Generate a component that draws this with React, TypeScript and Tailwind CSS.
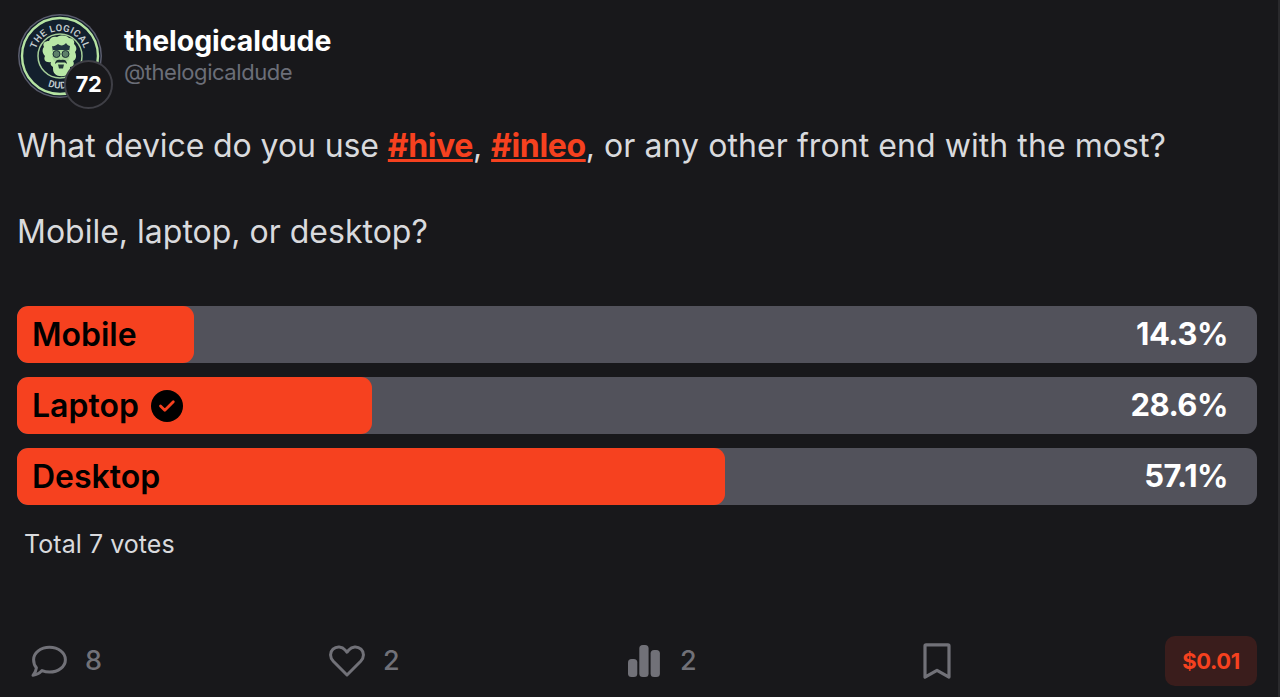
import React from 'react'

const options = [
  { name: 'Mobile', percent: 14.3, voted: false },
  { name: 'Laptop', percent: 28.6, voted: true },
  { name: 'Desktop', percent: 57.1, voted: false },
]

const Avatar = () => (
  <svg viewBox="0 0 84 84" className="size-[84px]">
    <defs>
      <path id="top-arc" d="M17 42a25 25 0 0 1 50 0" />
      <path id="bottom-arc" d="M9.500 42a32.500 32.500 0 0 0 65 0" />
    </defs>
    <circle cx="42" cy="42" r="42" fill="#5b5d6e" />
    <circle cx="42" cy="42" r="40.5" fill="#111c29" />
    <circle cx="42" cy="42" r="38" fill="#13202d" stroke="#b5e3a2" strokeWidth="2.4" />
    <circle cx="42" cy="42" r="22" fill="#13202d" stroke="#a5cf98" strokeWidth="1.5" />
    <g fill="#c3cdd0" fontSize="9.500" fontWeight="600" fontFamily="Roboto, sans-serif">
      <text textAnchor="middle" letterSpacing="0.500">
        <textPath href="#top-arc" startOffset="50%">THE LOGICAL</textPath>
      </text>
      <text textAnchor="middle" letterSpacing="0.300">
        <textPath href="#bottom-arc" startOffset="50%">DUDE</textPath>
      </text>
    </g>
    {/* hair and beard */}
    <path
      d="M31 27c1-4 5-5 8-4 4-2 9-2 12 1 4 0 6 3 5 6 3 3 3 6 1 8 2 4 1 8-2 9 2 3 0 6-3 6 0 3 0 5-2 7-3 3-10 3-13 0-2-2-2-4-2-7-2-1-3-3-2-5-5 1-8-2-6-6-3-3-3-7-1-9-2-4 1-6 5-6z"
      fill="#b9e8a6"
    />
    <path d="M34 32c2 1 4-1 6-2 2 2 6 2 8-1 1 2 3 3 4 3l-1 6H35z" fill="#233740" />
    <path d="M35 36h16l1 7-2 4H36l-2-4z" fill="#a8d699" />
    <circle cx="38.500" cy="40" r="3.500" fill="#5d8069" stroke="#1d3037" />
    <circle cx="47.500" cy="40" r="3.500" fill="#5d8069" stroke="#1d3037" />
    <path d="M37 50c0-4 3-5 6-4 3-1 6 0 6 4l-2-1.500h-8z" fill="#1b2d31" />
    <path d="M40 50.500h6l-1 4h-4z" fill="#243a39" />
  </svg>
)

const CommentIcon = () => (
  <svg viewBox="0 0 36 33" className="h-[33px] w-9" fill="none" stroke="currentColor" strokeWidth="3" strokeLinejoin="round">
    <path d="M18.500 2.300c8.800 0 15.900 5.500 15.900 12.400s-7.100 12.400-15.900 12.400c-2.700 0-5.300-.6-7.500-1.500-2.300 2.500-5.600 4.300-9 4.700 1.800-2.400 3.200-5.200 3.400-7.500-1.800-2.200-2.800-5-2.800-8.100C2.600 7.800 9.700 2.300 18.500 2.300z" />
  </svg>
)

const HeartIcon = () => (
  <svg viewBox="0 0 36 32" className="h-8 w-9" fill="none" stroke="currentColor" strokeWidth="3" strokeLinejoin="round">
    <path d="M18 30 4.300 16.200C.7 12.400.700 7.300 4 4.200c3.600-3.300 9-2.900 12.200.9L18 7.200l1.800-2.100C23 1.300 28.400.9 32 4.200c3.300 3.100 3.300 8.200-.3 12z" />
  </svg>
)

const StatsIcon = () => (
  <svg viewBox="0 0 32 32" className="size-8" fill="currentColor">
    <rect x="0" y="14" width="9.300" height="18" rx="3.500" />
    <rect x="11.300" y="0" width="9.300" height="32" rx="3.500" />
    <rect x="22.600" y="5" width="9.300" height="27" rx="3.500" />
  </svg>
)

const BookmarkIcon = () => (
  <svg viewBox="0 0 28 36" className="h-9 w-7" fill="none" stroke="currentColor" strokeWidth="3.200" strokeLinejoin="round">
    <path d="M2 2.900Q2 1.900 3 1.900h22q1 0 1 1v31.200L14 27.300 2 34.100z" />
  </svg>
)

const App = () => {
  return (
    <div className="h-[697px] w-full overflow-hidden border-r-2 border-[#29292c] bg-[#18181b] pt-3.5 pr-[21px] pl-[17px] font-['Inter',sans-serif]">
      {/* Author */}
      <header className="ml-px flex h-[84px]">
        <div className="relative size-[84px] shrink-0">
          <Avatar />
          <span className="absolute top-[46px] left-[46px] flex size-[49px] items-center justify-center rounded-full border-2 border-[#3f3f46] bg-[#18181b] text-[22px] font-bold tracking-[-0.4px] text-white">
            72
          </span>
        </div>
        <div className="ml-[22px] pt-3">
          <h2 className="text-[28.4px] leading-[30px] font-bold text-white">thelogicaldude</h2>
          <p className="text-[22px] leading-8 tracking-[-0.45px] text-[#6b6e78]">@thelogicaldude</p>
        </div>
      </header>

      {/* Post */}
      <div className="mt-[26px] text-[32px] leading-[43px] whitespace-nowrap text-[#d9dadd]">
        <p>
          <span className="tracking-[-0.09px]">What device do you use </span>
          <a className="font-bold tracking-[-0.4px] text-[#f6411f] underline">#hive</a>,{' '}
          <a className="font-bold tracking-[-0.35px] text-[#f6411f] underline">#inleo</a>
          <span className="tracking-[0.07px]">, or any other front end with the most?</span>
        </p>
        <p className="mt-[43px]">Mobile, laptop, or desktop?</p>
      </div>

      {/* Poll */}
      <div className="mt-[53px] flex flex-col gap-3.5">
        {options.map((option) => (
          <div key={option.name} className="relative flex h-[57px] items-center justify-between overflow-hidden rounded-[11px] bg-[#52525b] pr-[29px] pl-[15px] text-[32px] font-semibold">
            <div className="absolute inset-y-0 left-0 rounded-[11px] bg-[#f6411f]" style={{ width: `${option.percent}%` }} />
            <span className="relative flex items-center gap-3 text-black">
              {option.name}
              {option.voted && (
                <svg viewBox="0 0 32 32" className="size-8">
                  <circle cx="16" cy="16" r="16" fill="#000" />
                  <path d="m9.500 16 4.300 4.200 8.500-8.500" fill="none" stroke="#f6411f" strokeWidth="2.800" strokeLinecap="round" strokeLinejoin="round" />
                </svg>
              )}
            </span>
            <span className="relative text-[31px] font-bold tracking-[-0.5px] text-white">{option.percent}%</span>
          </div>
        ))}
      </div>
      <p className="mt-[21px] ml-[7px] text-[25px] leading-9 tracking-[0.05px] text-[#d9dadd]">Total 7 votes</p>

      {/* Actions */}
      <footer className="mt-[74px] flex h-[50px] items-center text-[27px] font-medium text-[#717178]">
        <div className="flex w-[312px] items-center gap-[18px] pl-3.5">
          <CommentIcon />8
        </div>
        <div className="flex w-[299px] items-center gap-[18px]">
          <HeartIcon />2
        </div>
        <div className="flex w-[295px] items-center gap-5">
          <StatsIcon />2
        </div>
        <BookmarkIcon />
        <span className="ml-auto flex h-[50px] w-[92px] items-center justify-center rounded-[10px] bg-[#3a1d1c] text-[22px] font-bold tracking-[-0.4px] text-[#f6411f]">
          $0.01
        </span>
      </footer>
    </div>
  )
}

export default App
